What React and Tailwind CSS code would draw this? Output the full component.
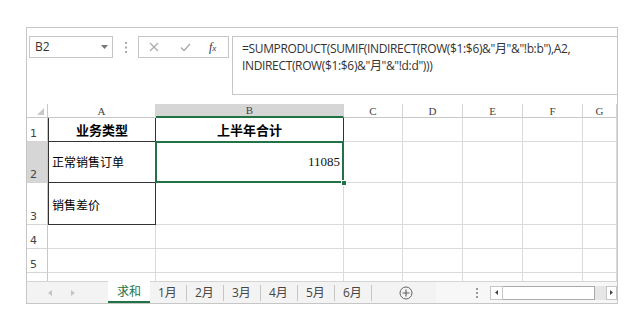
import React from "react";

const sans = { fontFamily: '"Open Sans", "Noto Sans CJK SC", sans-serif' };

function HeaderCell({ children, selected }) {
  return (
    <div
      className={
        "flex items-end justify-center text-[11px] leading-[12px] text-[#444] border-r border-[#d4d4d4] " +
        (selected ? "bg-[#d6d6d6] border-b-2 border-b-[#217346]" : "bg-white border-b border-b-[#c8c8c8]")
      }
      style={{ fontFamily: '"Liberation Serif", serif' }}
    >
      {children}
    </div>
  );
}

function RowHead({ n, selected }) {
  return (
    <div
      className={
        "flex items-end pl-[3px] pb-[1px] text-[11px] leading-[12px] text-[#444] border-b border-[#d4d4d4] border-r border-r-[#c8c8c8] " +
        (selected ? "bg-[#d6d6d6]" : "bg-white")
      }
      style={{ fontFamily: '"DejaVu Sans", sans-serif' }}
    >
      {n}
    </div>
  );
}

function Cell({ className = "", children }) {
  return <div className={"border-r border-b border-[#dadada] " + className}>{children}</div>;
}

export default function App() {
  const cjk = { fontFamily: '"Noto Sans CJK SC", sans-serif' };
  const tabs = ["1月", "2月", "3月", "4月", "5月", "6月"];
  return (
    <div className="w-[640px] h-[328px] bg-white pt-[27px] pl-[26px]">
      <div className="w-[592px] h-[277px] border border-[#c6c6c6] flex flex-col bg-white">
        {/* formula bar */}
        <div className="h-[76px] flex pt-[8px] pl-[2px]">
          <div className="w-[84px] h-[22px] border border-[#c6c6c6] flex items-center justify-between pl-[5px] pr-[4px]">
            <span className="text-[12px] text-[#333]" style={sans}>B2</span>
            <svg width="7" height="4" viewBox="0 0 7 4"><path d="M0 0h7L3.5 4z" fill="#777" /></svg>
          </div>
          <div className="w-[25px] h-[22px] flex items-center justify-center">
            <svg width="2" height="11" viewBox="0 0 2 11">
              <rect x="0" y="0" width="2" height="2" fill="#aaa" />
              <rect x="0" y="4.5" width="2" height="2" fill="#aaa" />
              <rect x="0" y="9" width="2" height="2" fill="#aaa" />
            </svg>
          </div>
          <div className="w-[91px] h-[22px] border border-[#c6c6c6] flex items-center">
            <svg className="ml-[10px]" width="10" height="10" viewBox="0 0 10 10">
              <path d="M1 1L9 9M9 1L1 9" stroke="#aaa" strokeWidth="1.2" />
            </svg>
            <svg className="ml-[21px]" width="11" height="9" viewBox="0 0 11 9">
              <path d="M1 4.5L4 7.5L10 1" stroke="#aaa" strokeWidth="1.3" fill="none" />
            </svg>
            <span
              className="ml-[18px] text-[12px] italic text-[#333]"
              style={{ fontFamily: '"Liberation Serif", serif' }}
            >
              f<span className="text-[9px]">x</span>
            </span>
          </div>
          <div
            className="ml-[3px] flex-1 h-[59px] border-l border-t border-b border-[#c6c6c6] pl-[9px] pt-[3px] text-[12px] leading-[17px] text-[#333]"
            style={sans}
          >
            <div className="tracking-[-0.35px]">=SUMPRODUCT(SUMIF(INDIRECT(ROW($1:$6)&"月"&"!b:b"),A2,</div>
            <div className="tracking-[-0.35px]">INDIRECT(ROW($1:$6)&"月"&"!d:d")))</div>
          </div>
        </div>

        {/* grid */}
        <div className="grid grid-cols-[21px_108px_188px_59px_60px_60px_60px_34px] grid-rows-[14px_24px_41px_42px_24px_24px_8px]">
          {/* header row */}
          <div className="relative border-r border-b border-[#c8c8c8] bg-white">
            <svg className="absolute right-[3px] bottom-[2px]" width="7" height="7" viewBox="0 0 7 7">
              <path d="M7 0V7H0z" fill="#c8c8c8" />
            </svg>
          </div>
          <HeaderCell>A</HeaderCell>
          <HeaderCell selected>B</HeaderCell>
          <HeaderCell>C</HeaderCell>
          <HeaderCell>D</HeaderCell>
          <HeaderCell>E</HeaderCell>
          <HeaderCell>F</HeaderCell>
          <HeaderCell>G</HeaderCell>

          {/* row 1 */}
          <RowHead n="1" />
          <div
            className="border-l border-r border-b border-[#333] flex items-center justify-center text-[13px] font-bold text-black"
            style={cjk}
          >
            业务类型
          </div>
          <div
            className="border-r border-b border-[#333] flex items-center justify-center text-[13px] font-bold text-black"
            style={cjk}
          >
            上半年合计
          </div>
          <Cell /><Cell /><Cell /><Cell /><Cell />

          {/* row 2 */}
          <RowHead n="2" selected />
          <div className="border-l border-r border-b border-[#333] flex items-center pl-[3px] text-[12px] text-black" style={cjk}>
            正常销售订单
          </div>
          <div className="relative border-r border-b border-[#dadada] flex items-center justify-end pr-[3px]">
            <span className="text-[13px] text-[#111]" style={{ fontFamily: '"Liberation Serif", serif' }}>11085</span>
            <div className="absolute -left-[1px] -top-[1px] -right-[1px] -bottom-[1px] border-2 border-[#217346]" />
            <div className="absolute -right-[4px] -bottom-[4px] w-[6px] h-[6px] bg-[#217346] border border-white" />
          </div>
          <Cell /><Cell /><Cell /><Cell /><Cell />

          {/* row 3 */}
          <RowHead n="3" />
          <div className="border-l border-r border-b border-[#333] flex items-center pl-[3px] pt-[3px] text-[12px] text-black" style={cjk}>
            销售差价
          </div>
          <Cell /><Cell /><Cell /><Cell /><Cell /><Cell />

          {/* row 4 */}
          <RowHead n="4" />
          <Cell /><Cell /><Cell /><Cell /><Cell /><Cell /><Cell />

          {/* row 5 */}
          <RowHead n="5" />
          <Cell /><Cell /><Cell /><Cell /><Cell /><Cell /><Cell />

          {/* partial row 6 */}
          <div className="border-r border-[#c8c8c8]" />
          <Cell className="border-b-0" /><Cell className="border-b-0" /><Cell className="border-b-0" />
          <Cell className="border-b-0" /><Cell className="border-b-0" /><Cell className="border-b-0" /><Cell className="border-b-0" />
        </div>

        {/* sheet tab bar */}
        <div className="flex-1 flex border-t border-[#d4d4d4] bg-[#f3f3f3]" style={sans}>
          <div className="w-[81px] flex items-center pl-[21px] gap-[19px]">
            <svg width="4" height="6" viewBox="0 0 4 6"><path d="M4 0V6L0 3z" fill="#c4c4c4" /></svg>
            <svg width="4" height="6" viewBox="0 0 4 6"><path d="M0 0V6L4 3z" fill="#c4c4c4" /></svg>
          </div>
          <div className="w-[42px] -mt-[1px] bg-white flex items-center justify-center border-b-2 border-[#217346] text-[12px] text-[#217346]" style={cjk}>
            求和
          </div>
          {tabs.map((t) => (
            <div key={t} className="w-[37px] flex items-center">
              <span className="w-[36px] pl-[8px] text-[12px] text-[#444]">{t}</span>
              <div className="w-[1px] h-[16px] bg-[#c6c6c6]" />
            </div>
          ))}
          <div className="w-[64px] flex items-center justify-center pl-[4px]">
            <svg width="14" height="14" viewBox="0 0 14 14">
              <circle cx="7" cy="7" r="6" stroke="#666" strokeWidth="1" fill="none" />
              <path d="M7 3.5V10.5M3.5 7H10.5" stroke="#666" strokeWidth="1.2" />
            </svg>
          </div>
          <div className="flex-1 flex items-center bg-[#f7f7f7]">
            <svg className="ml-[40px]" width="2" height="10" viewBox="0 0 2 10">
              <rect x="0" y="0" width="2" height="2" fill="#999" />
              <rect x="0" y="4" width="2" height="2" fill="#999" />
              <rect x="0" y="8" width="2" height="2" fill="#999" />
            </svg>
            <div className="ml-[12px] w-[13px] h-[14px] border border-[#c6c6c6] bg-white flex items-center justify-center">
              <svg width="3" height="5" viewBox="0 0 3 5"><path d="M3 0V5L0 2.5z" fill="#444" /></svg>
            </div>
            <div className="w-[92px] h-[14px] border border-l-0 border-[#aaa] bg-white" />
            <div className="w-[11px] h-[14px] bg-[#e6e6e6]" />
            <div className="w-[11px] h-[14px] border border-[#c6c6c6] bg-white flex items-center justify-center">
              <svg width="3" height="5" viewBox="0 0 3 5"><path d="M0 0V5L3 2.5z" fill="#444" /></svg>
            </div>
          </div>
        </div>
      </div>
    </div>
  );
}
